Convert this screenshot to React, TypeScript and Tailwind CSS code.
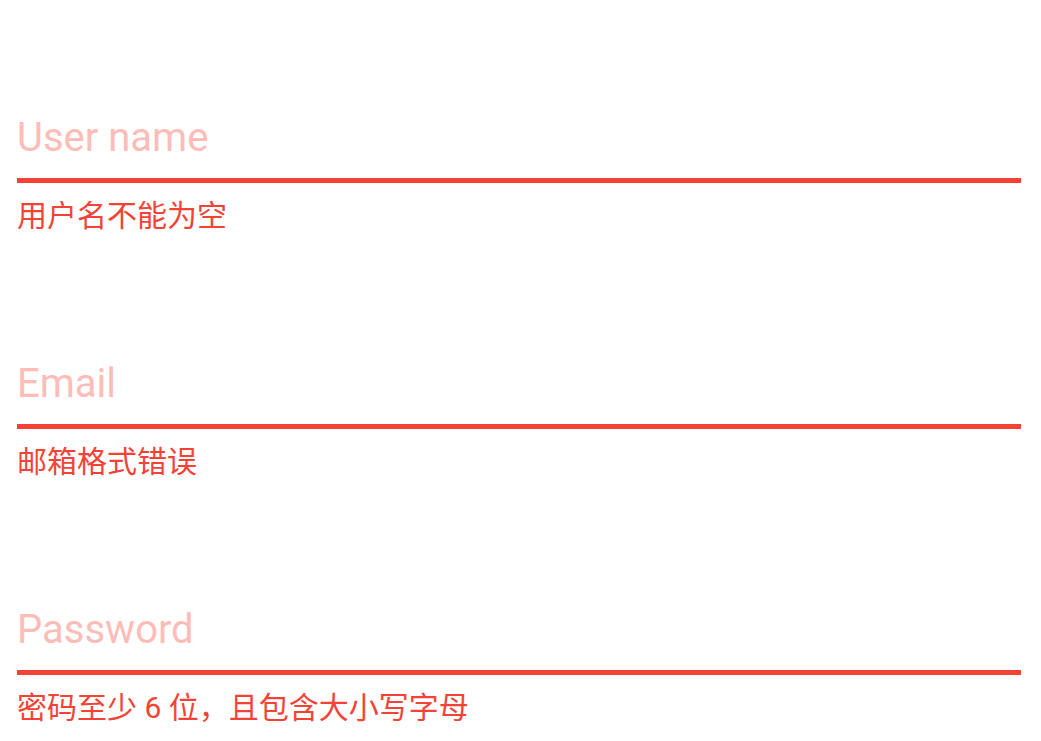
const fields = [
  { hint: "User name", error: "用户名不能为空", type: "text" },
  { hint: "Email", error: "邮箱格式错误", type: "email" },
  { hint: "Password", error: "密码至少 6 位，且包含大小写字母", type: "password" },
];

function ErrorField({ hint, error, type }: { hint: string; error: string; type: string }) {
  return (
    <div className="flex flex-col">
      <input
        type={type}
        placeholder={hint}
        className="h-[68px] w-full border-b-[5px] border-[#f44336] bg-transparent pb-[19px] text-[40px] leading-[48px] text-[#212121] outline-none placeholder:text-[#fcbcb8]"
      />
      <p className="mt-[10px] text-[30px] leading-[45px] text-[#f44336]">{error}</p>
    </div>
  );
}

export default function App() {
  return (
    <div
      className="flex min-h-screen flex-col gap-[123px] bg-white pl-[17px] pr-[20px] pt-[115px]"
      style={{ fontFamily: 'Roboto, "Noto Sans CJK SC", sans-serif' }}
    >
      {fields.map((field) => (
        <ErrorField key={field.hint} {...field} />
      ))}
    </div>
  );
}
